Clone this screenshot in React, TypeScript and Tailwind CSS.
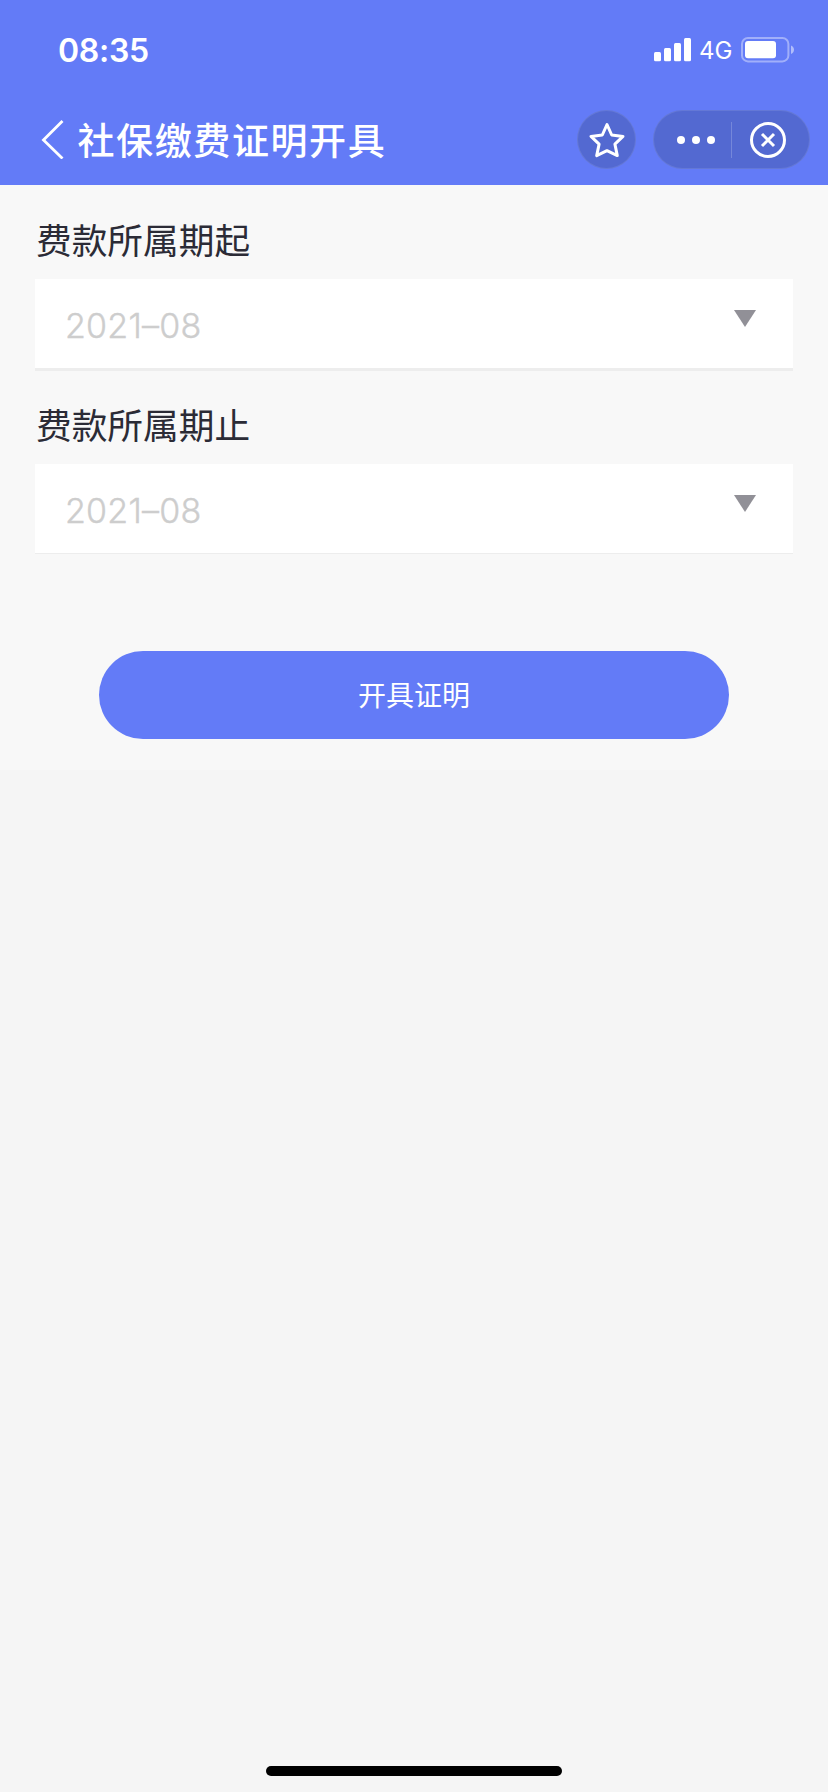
interface MonthFieldProps {
  label: string;
  value: string;
  thick?: boolean;
}

function StatusBar(): React.JSX.Element {
  return (
    <div className="flex h-[99px] items-center justify-between pl-[58px] pr-[33px]">
      <span className="pt-[2px] font-['Inter',sans-serif] text-[32px] leading-[40px] font-semibold tracking-[-0.3px]">
        08:35
      </span>
      <div className="flex items-center">
        <svg width="37" height="24" viewBox="0 0 37 24" fill="currentColor">
          <rect x="0" y="14" width="7" height="9.3" rx="1.5" />
          <rect x="10" y="10" width="7" height="13.3" rx="1.5" />
          <rect x="20" y="5" width="7" height="18.3" rx="1.5" />
          <rect x="30" y="0" width="7" height="23.3" rx="1.5" />
        </svg>
        <span className="ml-2 w-[34px] whitespace-nowrap pt-[2px] font-['Inter',sans-serif] text-[24px] leading-[28px]">4G</span>
        <svg className="ml-2" width="54" height="26" viewBox="0 0 54 26" fill="none">
          <rect x="1" y="1" width="46.4" height="23.4" rx="6" stroke="currentColor" strokeOpacity="0.4" strokeWidth="2" />
          <rect x="4" y="4" width="31" height="17.3" rx="3" fill="currentColor" />
          <path d="M50 8.500c4 1.500 4 7 0 8.500z" fill="currentColor" fillOpacity="0.5" />
        </svg>
      </div>
    </div>
  );
}

function NavBar(): React.JSX.Element {
  return (
    <div className="flex items-center pt-[11px] pl-[41px] pr-[18px]">
      <svg width="23" height="39" viewBox="0 0 23 39" fill="none" stroke="currentColor" strokeWidth="2.800">
        <path d="M21.500 1 2.500 20l19 18.500" />
      </svg>
      <h1 className="ml-[13.500px] flex-1 whitespace-nowrap pb-[2px] text-[37px] leading-[44px] font-medium tracking-[1.6px]">
        社保缴费证明开具
      </h1>
      <button className="flex size-[59px] items-center justify-center rounded-full border border-white/10 bg-[#5369d1]">
        <svg width="40" height="40" viewBox="0 0 40 40" fill="none" stroke="currentColor" strokeWidth="3" strokeLinejoin="round">
          <path d="M20 4.500 24.700 15 36 16.400 27.900 24.100 30.300 35.600 20 30.700 9.700 35.600 12.100 24.100 4 16.400 15.300 15z" />
        </svg>
      </button>
      <div className="ml-[17px] flex h-[59px] w-[157px] items-center rounded-full border border-white/10 bg-[#5369d1]">
        <button className="flex h-9 w-[78px] items-center justify-center gap-[7px] border-r border-white/20 pl-[6px]">
          <span className="size-2 rounded-full bg-white" />
          <span className="size-2 rounded-full bg-white" />
          <span className="size-2 rounded-full bg-white" />
        </button>
        <button className="ml-[17px]">
          <svg width="38" height="38" viewBox="0 0 38 38" fill="none" stroke="currentColor" strokeWidth="3">
            <circle cx="19" cy="19" r="16.5" />
            <path d="m13 13 12 12M25 13 13 25" />
          </svg>
        </button>
      </div>
    </div>
  );
}

function MonthField({ label, value, thick = false }: MonthFieldProps): React.JSX.Element {
  return (
    <div className="h-[185px] px-[35px]">
      <div className="h-[94px] pt-[29px] pl-[1px] text-[35.700px] leading-[50px] text-[#2b2b36]">{label}</div>
      <div
        className={
          thick
            ? 'flex h-[92px] justify-between border-b-[3px] border-[#ededed] bg-white pl-[30px] pr-[36px]'
            : 'flex h-[90px] justify-between border-b border-[#ededed] bg-white pl-[30px] pr-[36px]'
        }
      >
        <span className="pt-[26px] font-['Inter',sans-serif] text-[34px] leading-[42px] font-light tracking-[0.25px] text-[#cdcdcd] [-webkit-text-stroke:0.4px_#cdcdcd]">
          {value}
        </span>
        <svg className="mt-[31px]" width="24" height="18" viewBox="0 0 24 18">
          <path d="M1 0h22L12 17z" fill="#919097" />
        </svg>
      </div>
    </div>
  );
}

export default function App(): React.JSX.Element {
  return (
    <div className="flex h-[1792px] w-[828px] flex-col bg-[#f5f5f5] font-['Noto_Sans_CJK_SC',sans-serif]">
      <header className="h-[185px] bg-[#637bf7] text-white">
        <StatusBar />
        <NavBar />
      </header>

      <main className="h-[585px] bg-[#f8f8f8]">
        <MonthField label="费款所属期起" value="2021–08" thick />
        <MonthField label="费款所属期止" value="2021–08" />
        <button className="mx-auto mt-[96px] block h-[88px] w-[630px] rounded-full bg-[#637bf7] text-[28px] leading-[86px] text-white">
          <span className="block h-[88px]">开具证明</span>
        </button>
      </main>

      {/* Home indicator */}
      <div className="mx-auto mt-auto mb-4 h-[10px] w-[296px] rounded-full bg-black" />
    </div>
  );
}
